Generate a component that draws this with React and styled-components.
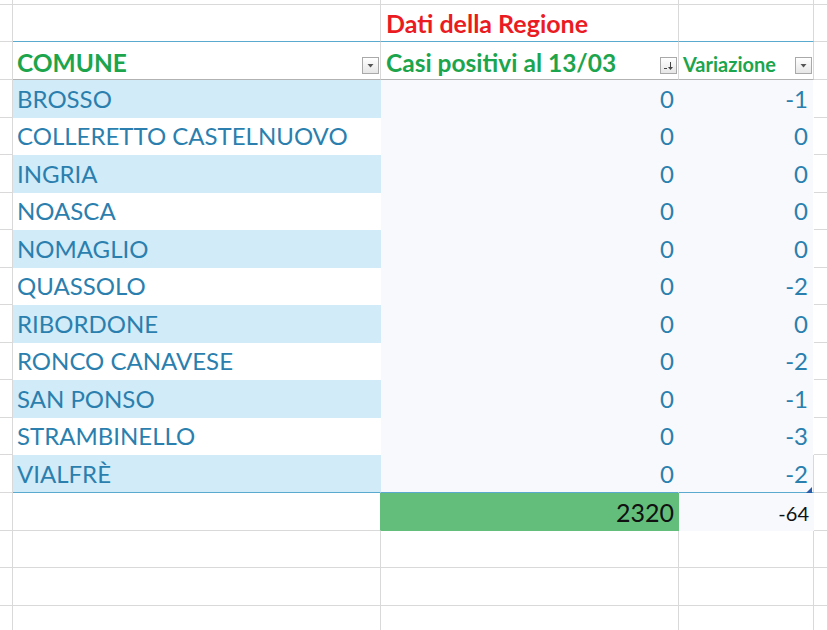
import React from "react";
import styled, { createGlobalStyle } from "styled-components";

const GRID = "#d9d9d9";
const TEAL_LINE = "#5aaad0";
const HEAD_LINE = "#b2b2b2";
const BAND = "#d1ebf8";
const PALE = "#f7f9fc";
const GREEN_FILL = "#63be7b";

const GlobalStyle = createGlobalStyle`
  html, body {
    margin: 0;
    padding: 0;
    background: #ffffff;
    overflow: hidden;
  }
  body {
    font-family: Lato, "Liberation Sans", sans-serif;
  }
`;

const Sheet = styled.div`
  display: flex;
  flex-direction: column;
  width: 828px;
  height: 630px;
  overflow: hidden;
`;

const Row = styled.div`
  display: flex;
  flex: 0 0 ${(p) => p.$h}px;
  height: ${(p) => p.$h}px;
`;

const Cell = styled.div`
  box-sizing: border-box;
  position: relative;
  flex: ${(p) => (p.$w ? `0 0 ${p.$w}px` : "1 1 auto")};
  height: 100%;
  display: flex;
  align-items: flex-end;
  justify-content: ${(p) => (p.$right ? "flex-end" : "space-between")};
  padding: 0 ${(p) => (p.$pr != null ? p.$pr : 0)}px ${(p) => (p.$pb != null ? p.$pb : 0)}px ${(p) => (p.$pl != null ? p.$pl : 0)}px;
  background: ${(p) => p.$bg || "#ffffff"};
  border-right: 1px solid ${(p) => p.$br || GRID};
  border-bottom: 1px solid ${(p) => p.$bb || GRID};
  white-space: nowrap;
`;

const RegionTitle = styled.span`
  font-weight: 700;
  font-size: 25px;
  line-height: 1.2;
  color: #ea1b22;
`;

const HeadText = styled.span`
  font-weight: 700;
  font-size: ${(p) => (p.$small ? 20 : 24.5)}px;
  line-height: 1.2;
  color: #1ca54c;
  margin-bottom: ${(p) => (p.$small ? 0 : -1)}px;
`;

const Name = styled.span`
  font-size: 24px;
  line-height: 1.2;
  color: #2b7fae;
`;

const Num = styled.span`
  font-size: 24px;
  line-height: 1.2;
  color: #2b7fae;
`;

const TotalNum = styled.span`
  font-size: ${(p) => (p.$small ? 20 : 25)}px;
  line-height: 1.2;
  color: #111111;
`;

const FilterButton = styled.div`
  box-sizing: border-box;
  flex: 0 0 17px;
  width: 17px;
  height: 17px;
  margin-bottom: 2px;
  border: 1px solid #a9a9a9;
  background: linear-gradient(#ffffff, #e6e6e6);
  display: flex;
  align-items: center;
  justify-content: center;
`;

const Handle = styled.svg`
  position: absolute;
  right: 1px;
  bottom: -1px;
`;

const FilterIcon = ({ sorted }) => (
  <FilterButton>
    {sorted ? (
      <svg width="13" height="13" viewBox="0 0 13 13">
        <rect x="2" y="9" width="3" height="1" fill="#444" />
        <rect x="8" y="3" width="1" height="6" fill="#444" />
        <polygon points="6,8 11,8 8.5,11" fill="#444" />
      </svg>
    ) : (
      <svg width="9" height="9" viewBox="0 0 9 9">
        <polygon points="1.5,3 7.5,3 4.5,6.5" fill="#555" />
      </svg>
    )}
  </FilterButton>
);

const W = [13, 368, 298, 135];

const comuni = [
  ["BROSSO", 0, -1],
  ["COLLERETTO CASTELNUOVO", 0, 0],
  ["INGRIA", 0, 0],
  ["NOASCA", 0, 0],
  ["NOMAGLIO", 0, 0],
  ["QUASSOLO", 0, -2],
  ["RIBORDONE", 0, 0],
  ["RONCO CANAVESE", 0, -2],
  ["SAN PONSO", 0, -1],
  ["STRAMBINELLO", 0, -3],
  ["VIALFRÈ", 0, -2],
];

const dataHeights = [38, 37, 38, 37, 38, 37, 38, 37, 38, 37, 38];

const EmptyRow = ({ h }) => (
  <Row $h={h}>
    <Cell $w={W[0]} />
    <Cell $w={W[1]} />
    <Cell $w={W[2]} />
    <Cell $w={W[3]} />
    <Cell />
  </Row>
);

export default function App() {
  const total = comuni.length;
  return (
    <>
      <GlobalStyle />
      <Sheet>
        <EmptyRow h={5} />

        <Row $h={37}>
          <Cell $w={W[0]} />
          <Cell $w={W[1]} $bb={TEAL_LINE} />
          <Cell $w={W[2]} $bb={TEAL_LINE} $pl={5} $pb={3}>
            <RegionTitle>Dati della Regione</RegionTitle>
          </Cell>
          <Cell $w={W[3]} $bb={TEAL_LINE} />
          <Cell />
        </Row>

        <Row $h={38}>
          <Cell $w={W[0]} />
          <Cell $w={W[1]} $bb={HEAD_LINE} $pl={4} $pr={1} $pb={3}>
            <HeadText>COMUNE</HeadText>
            <FilterIcon />
          </Cell>
          <Cell $w={W[2]} $bb={HEAD_LINE} $pl={5} $pr={1} $pb={3}>
            <HeadText>Casi positivi al 13/03</HeadText>
            <FilterIcon sorted />
          </Cell>
          <Cell $w={W[3]} $bb={HEAD_LINE} $pl={4} $pr={1} $pb={3}>
            <HeadText $small>Variazione</HeadText>
            <FilterIcon />
          </Cell>
          <Cell />
        </Row>

        {comuni.map(([name, casi, delta], i) => {
          const last = i === total - 1;
          return (
            <Row key={name} $h={dataHeights[i]}>
              <Cell $w={W[0]} />
              <Cell
                $w={W[1]}
                $bg={i % 2 === 0 ? BAND : "#ffffff"}
                $br={i % 2 === 0 ? BAND : "#ffffff"}
                $bb={last ? TEAL_LINE : i % 2 === 0 ? BAND : "#ffffff"}
                $pl={4}
                $pb={3}
              >
                <Name>{name}</Name>
              </Cell>
              <Cell
                $w={W[2]}
                $right
                $bg={PALE}
                $br={PALE}
                $bb={last ? TEAL_LINE : PALE}
                $pr={4}
                $pb={3}
              >
                <Num>{casi}</Num>
              </Cell>
              <Cell
                $w={W[3]}
                $right
                $bg={PALE}
                $br={last ? GRID : "#ffffff"}
                $bb={last ? TEAL_LINE : PALE}
                $pr={5}
                $pb={3}
              >
                <Num>{delta}</Num>
                {last && (
                  <Handle width="6" height="6" viewBox="0 0 6 6">
                    <polygon points="6,0 6,6 0,6" fill="#2a5aa8" />
                  </Handle>
                )}
              </Cell>
              <Cell />
            </Row>
          );
        })}

        <Row $h={38}>
          <Cell $w={W[0]} />
          <Cell $w={W[1]} $br={GREEN_FILL} />
          <Cell $w={W[2]} $right $bg={GREEN_FILL} $br={GREEN_FILL} $bb={GREEN_FILL} $pr={4} $pb={3}>
            <TotalNum>2320</TotalNum>
          </Cell>
          <Cell $w={W[3]} $right $bg={PALE} $br={PALE} $bb={PALE} $pr={4} $pb={5}>
            <TotalNum $small>-64</TotalNum>
          </Cell>
          <Cell />
        </Row>

        <EmptyRow h={37} />
        <EmptyRow h={38} />
        <EmptyRow h={40} />
      </Sheet>
    </>
  );
}
